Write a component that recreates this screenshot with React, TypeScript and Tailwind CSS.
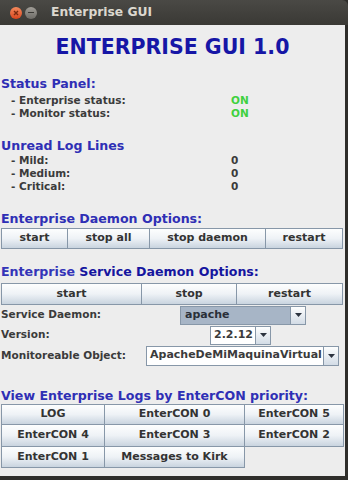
import React from 'react'

const font = { fontFamily: '"DejaVu Sans", Verdana, sans-serif' }

function Btn({ label, className = '' }: { label: string; className?: string }) {
  return (
    <div
      className={`flex items-center justify-center border border-[#8797a8] bg-gradient-to-b from-[#fdfefe] via-[#eef2f6] to-[#c9d4df] text-[11px] font-bold text-[#333] ${className}`}
    >
      {label}
    </div>
  )
}

function Arrow() {
  return (
    <div className="flex h-full w-[15px] items-center justify-center border-l border-[#8797a8] bg-gradient-to-b from-[#fdfefe] to-[#d3dce6]">
      <svg width="7" height="4" viewBox="0 0 7 4">
        <path d="M0 0h7L3.5 4z" fill="#2d3440" />
      </svg>
    </div>
  )
}

function Row({ label, value, green }: { label: string; value: string; green?: boolean }) {
  return (
    <div className="flex h-[13px] items-center text-[10.5px] font-bold text-[#3b3b3b]">
      <span className="w-[231px] pl-[11px]">- {label}</span>
      <span className={green ? 'text-[#3fd13f]' : 'text-[#3b3b3b]'}>{value}</span>
    </div>
  )
}

function Heading({ children }: { children: React.ReactNode }) {
  return <div className="flex h-[14px] items-center pl-[1px] text-[12.6px] font-bold text-[#2f2fb5]">{children}</div>
}

export default function App() {
  return (
    <div className="h-[480px] w-[348px] overflow-hidden bg-[#2f2e2b]" style={font}>
      <div className="flex h-[25px] items-center bg-gradient-to-b from-[#4a4945] to-[#3a3935] rounded-tr-[6px]">
        <div className="ml-[10px] flex h-[12px] w-[12px] items-center justify-center rounded-full bg-gradient-to-b from-[#f58a5c] to-[#d8441c]">
          <svg width="6" height="6" viewBox="0 0 6 6">
            <path d="M1 1l4 4M5 1L1 5" stroke="#7a2a10" strokeWidth="1.4" />
          </svg>
        </div>
        <div className="ml-[3px] flex h-[12px] w-[12px] items-center justify-center rounded-full bg-gradient-to-b from-[#a19e98] to-[#6e6c67]">
          <div className="h-[1.5px] w-[6px] bg-[#3a3935]" />
        </div>
        <span className="ml-[14px] text-[12.3px] font-bold text-[#dcd8cf]">Enterprise GUI</span>
      </div>

      <div className="h-[451px] w-[345px] bg-[#ededed]">
        <div className="flex h-[44px] items-center justify-center text-[20.5px] font-bold text-[#1616a6]">
          ENTERPRISE GUI 1.0
        </div>

        <div className="h-[8px]" />
        <Heading>Status Panel:</Heading>
        <div className="h-[3px]" />
        <Row label="Enterprise status:" value="ON" green />
        <Row label="Monitor status:" value="ON" green />

        <div className="h-[19px]" />
        <Heading>Unread Log Lines</Heading>
        <div className="h-[1px]" />
        <Row label="Mild:" value="0" />
        <Row label="Medium:" value="0" />
        <Row label="Critical:" value="0" />

        <div className="h-[19px]" />
        <Heading>Enterprise Daemon Options:</Heading>
        <div className="h-[2px]" />
        <div className="flex h-[21px] pl-[1px] pr-[2px]">
          <Btn label="start" className="w-[67px]" />
          <Btn label="stop all" className="-ml-px w-[83px]" />
          <Btn label="stop daemon" className="-ml-px w-[117px]" />
          <Btn label="restart" className="-ml-px flex-1" />
        </div>

        <div className="h-[16px]" />
        <div className="flex h-[14px] items-center pl-[1px] text-[12.6px] font-bold">
          <span className="text-[#3434b8]">Enterprise&nbsp;</span>
          <span className="text-[#15159f]">Service Daemon Options:</span>
        </div>
        <div className="h-[4px]" />
        <div className="flex h-[22px] pl-[1px] pr-[2px]">
          <Btn label="start" className="w-[141px]" />
          <Btn label="stop" className="-ml-px w-[96px]" />
          <Btn label="restart" className="-ml-px flex-1" />
        </div>

        <div className="flex h-[20px] items-center text-[10.5px] font-bold text-[#3b3b3b]">
          <span className="w-[180px] pl-[1px]">Service Daemon:</span>
          <div className="flex h-[19px] w-[126px] items-center border border-[#8797a8] bg-[#a7b5c6] text-[11px]">
            <span className="flex-1 pl-[4px] text-[#2a2f38]">apache</span>
            <Arrow />
          </div>
        </div>
        <div className="flex h-[20px] items-center text-[10.5px] font-bold text-[#3b3b3b]">
          <span className="w-[210px] pl-[1px]">Version:</span>
          <div className="flex h-[19px] w-[61px] items-center border border-[#8797a8] bg-white text-[11px]">
            <span className="flex-1 pl-[3px]">2.2.12</span>
            <Arrow />
          </div>
        </div>
        <div className="flex h-[21px] items-center text-[10.5px] font-bold text-[#3b3b3b]">
          <span className="w-[146px] pl-[1px]">Monitoreable Object:</span>
          <div className="flex h-[20px] w-[193px] items-center border border-[#8797a8] bg-white text-[11px]">
            <span className="flex-1 pl-[3px]">ApacheDeMiMaquinaVirtual</span>
            <Arrow />
          </div>
        </div>

        <div className="h-[23px]" />
        <Heading>View Enterprise Logs by EnterCON priority:</Heading>
        <div className="h-[1px]" />
        <div className="grid grid-cols-[104px_140px_99px] grid-rows-[21px_22px_21px] pl-[1px]">
          <Btn label="LOG" />
          <Btn label="EnterCON 0" className="-ml-px" />
          <Btn label="EnterCON 5" className="-ml-px" />
          <Btn label="EnterCON 4" className="-mt-px" />
          <Btn label="EnterCON 3" className="-ml-px -mt-px" />
          <Btn label="EnterCON 2" className="-ml-px -mt-px" />
          <Btn label="EnterCON 1" className="-mt-px" />
          <Btn label="Messages to Kirk" className="-ml-px -mt-px" />
        </div>
      </div>
    </div>
  )
}
